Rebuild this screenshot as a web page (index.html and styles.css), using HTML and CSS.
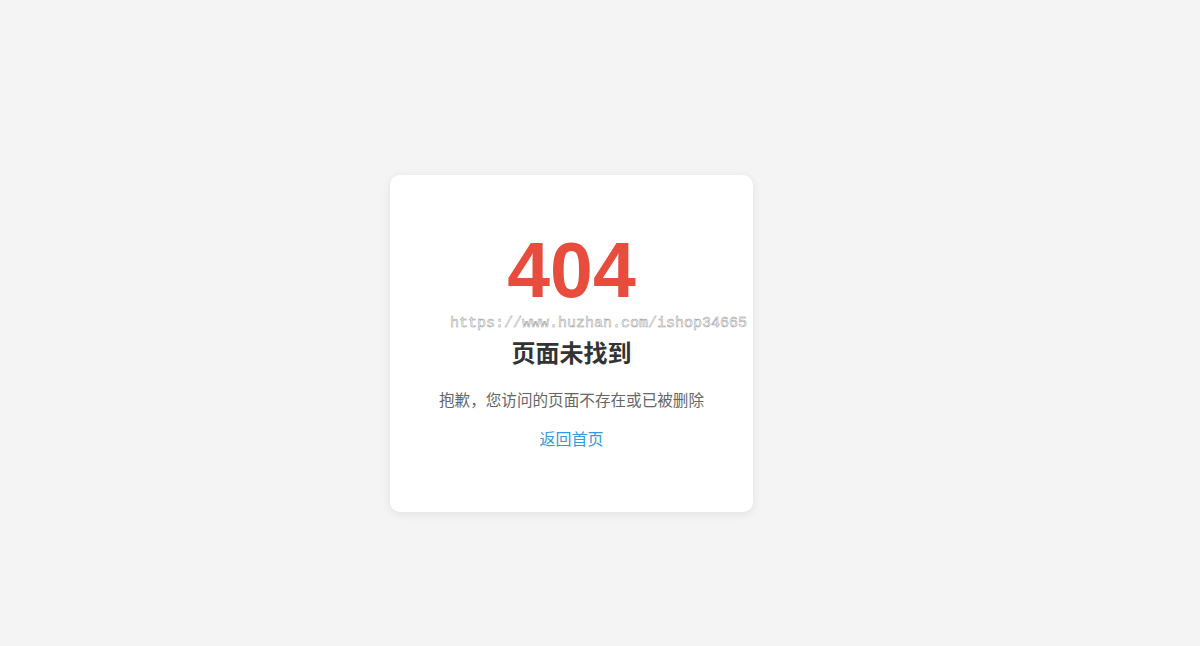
FILE: index.html
```html
<!DOCTYPE html>
<html lang="zh-CN">
<head>
<meta charset="utf-8">
<title>404 - 页面未找到</title>
<link rel="stylesheet" href="styles.css">
</head>
<body>
<main class="page">
  <section class="card">
    <h1 class="code">404</h1>
    <h2 class="title">页面未找到</h2>
    <p class="desc">抱歉，您访问的页面不存在或已被删除</p>
    <a class="home" href="#">返回首页</a>
    <div class="watermark">https://www.huzhan.com/ishop34665</div>
  </section>
</main>
</body>
</html>
```

FILE: styles.css
```css
html, body {
  margin: 0;
  height: 100%;
  background: #f4f4f4;
  font-family: "Liberation Sans", "Noto Sans CJK SC", sans-serif;
}

.page {
  box-sizing: border-box;
  height: 100%;
  display: flex;
  align-items: center;
  justify-content: center;
  padding: 41px 57px 0 0;
}

.card {
  position: relative;
  box-sizing: border-box;
  width: 363px;
  padding: 57px 20px 62px;
  background: #fff;
  border-radius: 10px;
  box-shadow: 0 2px 10px rgba(0, 0, 0, 0.08);
  display: flex;
  flex-direction: column;
  align-items: center;
  text-align: center;
}

.code {
  margin: 0;
  font-size: 77px;
  line-height: 76px;
  font-weight: bold;
  color: #e74c3c;
  font-family: "Liberation Sans", Arial, sans-serif;
}

.title {
  margin: 29px 0 0;
  font-size: 24px;
  line-height: 30px;
  font-weight: bold;
  color: #333;
  font-family: "Noto Sans CJK SC", sans-serif;
}

.desc {
  margin: 20px 0 0;
  font-size: 15.6px;
  line-height: 24px;
  color: #666;
  font-family: "Noto Sans CJK SC", sans-serif;
}

.home {
  margin-top: 15px;
  font-size: 16px;
  line-height: 24px;
  color: #3498db;
  text-decoration: none;
  font-family: "Noto Sans CJK SC", sans-serif;
}

.watermark {
  position: absolute;
  left: 60px;
  top: 139px;
  font-family: "Liberation Mono", monospace;
  font-size: 15px;
  line-height: 20px;
  white-space: nowrap;
  color: #fff;
  -webkit-text-stroke: 0.5px #999;
}
```
